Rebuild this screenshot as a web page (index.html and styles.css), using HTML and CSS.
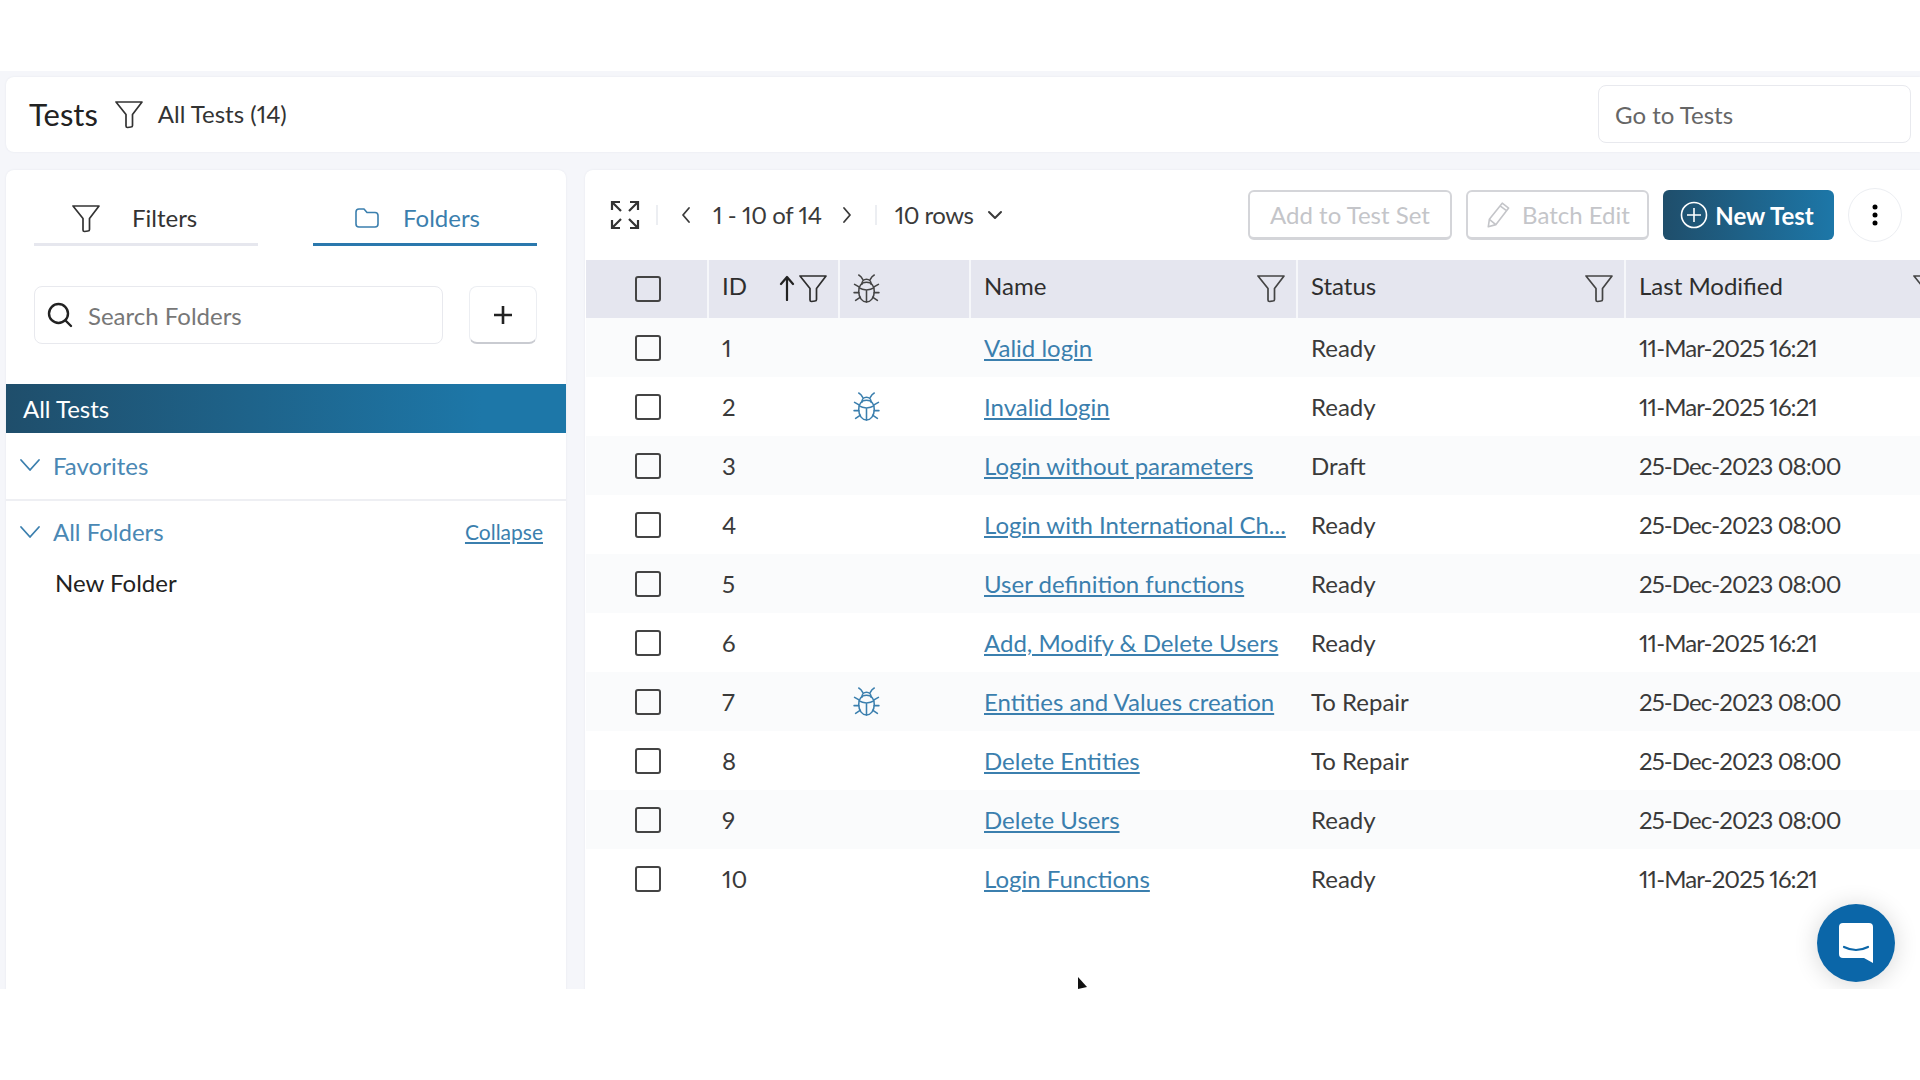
FILE: index.html
```html
<!DOCTYPE html>
<html lang="en">
<head>
    <meta charset="UTF-8">
    <title>Tests</title>
    <link rel="stylesheet" href="styles.css">
</head>
<body>
    <svg class="defs" width="0" height="0">
        <symbol id="funnel" viewBox="0 0 30 30">
            <path d="M2 3H28L18.5 15.5V26.5Q18.5 28 17 28L13.5 28.5Q12 28.5 12 27V15.5Z" fill="none" stroke="currentColor" stroke-width="1.7" stroke-linejoin="round"/>
        </symbol>
        <symbol id="bug" viewBox="0 0 26 28">
            <g fill="none" stroke="currentColor" stroke-width="1.5" stroke-linecap="round" stroke-linejoin="round">
                <path d="M13 8C7.5 8 5.500 12.500 5.500 17C5.500 23 9 27 13 27C17 27 20.500 23 20.500 17C20.500 12.500 18.500 8 13 8Z"/>
                <path d="M8.500 10C8.500 7 10.500 5 13 5C15.500 5 17.500 7 17.500 10"/>
                <path d="M6 13.500C9.500 16 16.500 16 20 13.500M13 15.500V27"/>
                <path d="M9.500 5.500C8.500 3.500 7.500 2 5.500 1M16.500 5.500C17.500 3.500 18.500 2 20.500 1M5.800 12.500L1.500 10M20.200 12.500L24.500 10M5.500 18H1M20.500 18H25M6.800 22.500L2.500 25.500M19.200 22.500L23.500 25.500"/>
            </g>
        </symbol>
        <symbol id="chev-down" viewBox="0 0 22 14">
            <path d="M2 2L11 12L20 2" fill="none" stroke="currentColor" stroke-width="1.8" stroke-linecap="round" stroke-linejoin="round"/>
        </symbol>
    </svg>

    <div class="frame">
        <header class="top-card">
            <h1 class="page-title">Tests</h1>
            <svg class="icon-funnel top-funnel"><use href="#funnel"/></svg>
            <span class="top-filter">All Tests (14)</span>
            <div class="goto">Go to Tests</div>
        </header>

        <div class="columns">
            <aside class="side">
                <div class="tabs">
                    <div class="tab">
                        <svg class="icon-funnel"><use href="#funnel"/></svg>
                        <span>Filters</span>
                    </div>
                    <div class="tab tab-active">
                        <svg class="icon-folder" viewBox="0 0 26 24"><path d="M2 6Q2 3 5 3H10L13 6.5H21Q24 6.5 24 9.500V18Q24 21 21 21H5Q2 21 2 18Z" fill="none" stroke="currentColor" stroke-width="1.6" stroke-linejoin="round"/></svg>
                        <span>Folders</span>
                    </div>
                </div>

                <div class="search-row">
                    <div class="search">
                        <svg class="icon-search" viewBox="0 0 28 28"><circle cx="12.500" cy="12.500" r="9.500" fill="none" stroke="currentColor" stroke-width="2.400"/><path d="M19.500 19.500L25 25" stroke="currentColor" stroke-width="2.400" stroke-linecap="round"/></svg>
                        <span>Search Folders</span>
                    </div>
                    <button class="add-btn">
                        <svg viewBox="0 0 20 20" width="20" height="20"><path d="M10 1V19M1 10H19" stroke="currentColor" stroke-width="2.600"/></svg>
                    </button>
                </div>

                <div class="all-tests">All Tests</div>

                <div class="group group-line">
                    <svg class="icon-chev"><use href="#chev-down"/></svg>
                    <span>Favorites</span>
                </div>
                <div class="group group-folders">
                    <svg class="icon-chev"><use href="#chev-down"/></svg>
                    <span>All Folders</span>
                    <a class="collapse" href="#">Collapse</a>
                </div>
                <div class="folder">New Folder</div>
            </aside>

            <main class="panel">
                <div class="toolbar">
                    <svg class="icon-expand" viewBox="0 0 32 32">
                        <path d="M3 11V3H11M3 3L12 12M21 3H29V11M29 3L20 12M3 21V29H11M3 29L12 20M29 21V29H21M29 29L20 20" fill="none" stroke="currentColor" stroke-width="2.200"/>
                    </svg>
                    <span class="sep"></span>
                    <svg class="icon-page" viewBox="0 0 12 20"><path d="M9 3L3 10L9 17" fill="none" stroke="currentColor" stroke-width="1.800" stroke-linecap="round" stroke-linejoin="round"/></svg>
                    <span class="page-info">1 - 10 of 14</span>
                    <svg class="icon-page" viewBox="0 0 12 20"><path d="M3 3L9 10L3 17" fill="none" stroke="currentColor" stroke-width="1.800" stroke-linecap="round" stroke-linejoin="round"/></svg>
                    <span class="sep sep-b"></span>
                    <span class="rows-info">10 rows</span>
                    <svg class="icon-rows" viewBox="0 0 16 10"><path d="M2 2L8 8L14 2" fill="none" stroke="currentColor" stroke-width="2" stroke-linecap="round" stroke-linejoin="round"/></svg>

                    <div class="actions">
                        <button class="btn btn-off btn-set">Add to Test Set</button>
                        <button class="btn btn-off btn-batch">
                            <svg class="icon-pencil" viewBox="0 0 26 28"><path d="M3 25L4 18L16 3L22 7.500L10 23ZM4 18L10 23M14 5.500L20 10" fill="none" stroke="currentColor" stroke-width="1.500" stroke-linejoin="round"/></svg>
                            Batch Edit
                        </button>
                        <button class="btn btn-new">
                            <svg class="icon-plus" viewBox="0 0 28 28"><circle cx="14" cy="14" r="12.500" fill="none" stroke="currentColor" stroke-width="1.600"/><path d="M14 7V21M7 14H21" stroke="currentColor" stroke-width="1.600"/></svg>
                            New Test
                        </button>
                        <button class="btn-more">
                            <svg viewBox="0 0 6 22" width="6" height="22"><circle cx="3" cy="3" r="2.500"/><circle cx="3" cy="11" r="2.500"/><circle cx="3" cy="19" r="2.500"/></svg>
                        </button>
                    </div>
                </div>

                <div class="row row-head">
                    <div class="cell cell-check"><span class="check"></span></div>
                    <div class="cell"><span class="head-label">ID</span><span class="arrow-up"><svg viewBox="0 0 16 26" width="16" height="26"><path d="M8 25V2M2 9L8 2L14 9" fill="none" stroke="currentColor" stroke-width="2.200" stroke-linecap="round" stroke-linejoin="round"/></svg></span><svg class="icon-funnel id-funnel"><use href="#funnel"/></svg></div>
                    <div class="cell"><svg class="icon-bug"><use href="#bug"/></svg></div>
                    <div class="cell"><span class="head-label">Name</span><svg class="icon-funnel cell-funnel"><use href="#funnel"/></svg></div>
                    <div class="cell"><span class="head-label">Status</span><svg class="icon-funnel cell-funnel"><use href="#funnel"/></svg></div>
                    <div class="cell"><span class="head-label">Last Modified</span><svg class="icon-funnel cell-funnel"><use href="#funnel"/></svg></div>
                </div>

                <div class="row">
                    <div class="cell cell-check"><span class="check"></span></div>
                    <div class="cell">1</div>
                    <div class="cell"></div>
                    <div class="cell"><a href="#">Valid login</a></div>
                    <div class="cell">Ready</div>
                    <div class="cell cell-date">11-Mar-2025 16:21</div>
                </div>
                <div class="row">
                    <div class="cell cell-check"><span class="check"></span></div>
                    <div class="cell">2</div>
                    <div class="cell"><svg class="icon-bug bug-link"><use href="#bug"/></svg></div>
                    <div class="cell"><a href="#">Invalid login</a></div>
                    <div class="cell">Ready</div>
                    <div class="cell cell-date">11-Mar-2025 16:21</div>
                </div>
                <div class="row">
                    <div class="cell cell-check"><span class="check"></span></div>
                    <div class="cell">3</div>
                    <div class="cell"></div>
                    <div class="cell"><a href="#">Login without parameters</a></div>
                    <div class="cell">Draft</div>
                    <div class="cell cell-date">25-Dec-2023 08:00</div>
                </div>
                <div class="row">
                    <div class="cell cell-check"><span class="check"></span></div>
                    <div class="cell">4</div>
                    <div class="cell"></div>
                    <div class="cell"><a href="#">Login with International Ch...</a></div>
                    <div class="cell">Ready</div>
                    <div class="cell cell-date">25-Dec-2023 08:00</div>
                </div>
                <div class="row">
                    <div class="cell cell-check"><span class="check"></span></div>
                    <div class="cell">5</div>
                    <div class="cell"></div>
                    <div class="cell"><a href="#">User definition functions</a></div>
                    <div class="cell">Ready</div>
                    <div class="cell cell-date">25-Dec-2023 08:00</div>
                </div>
                <div class="row">
                    <div class="cell cell-check"><span class="check"></span></div>
                    <div class="cell">6</div>
                    <div class="cell"></div>
                    <div class="cell"><a href="#">Add, Modify &amp; Delete Users</a></div>
                    <div class="cell">Ready</div>
                    <div class="cell cell-date">11-Mar-2025 16:21</div>
                </div>
                <div class="row">
                    <div class="cell cell-check"><span class="check"></span></div>
                    <div class="cell">7</div>
                    <div class="cell"><svg class="icon-bug bug-link"><use href="#bug"/></svg></div>
                    <div class="cell"><a href="#">Entities and Values creation</a></div>
                    <div class="cell">To Repair</div>
                    <div class="cell cell-date">25-Dec-2023 08:00</div>
                </div>
                <div class="row">
                    <div class="cell cell-check"><span class="check"></span></div>
                    <div class="cell">8</div>
                    <div class="cell"></div>
                    <div class="cell"><a href="#">Delete Entities</a></div>
                    <div class="cell">To Repair</div>
                    <div class="cell cell-date">25-Dec-2023 08:00</div>
                </div>
                <div class="row">
                    <div class="cell cell-check"><span class="check"></span></div>
                    <div class="cell">9</div>
                    <div class="cell"></div>
                    <div class="cell"><a href="#">Delete Users</a></div>
                    <div class="cell">Ready</div>
                    <div class="cell cell-date">25-Dec-2023 08:00</div>
                </div>
                <div class="row">
                    <div class="cell cell-check"><span class="check"></span></div>
                    <div class="cell">10</div>
                    <div class="cell"></div>
                    <div class="cell"><a href="#">Login Functions</a></div>
                    <div class="cell">Ready</div>
                    <div class="cell cell-date">11-Mar-2025 16:21</div>
                </div>
            </main>
        </div>

        <button class="chat">
            <svg viewBox="0 0 36 42" width="36" height="42">
                <path d="M5 1H31Q35 1 35 5V41L26 36H5Q1 36 1 32V5Q1 1 5 1Z" fill="#fff"/>
                <path d="M6 25Q18 31 30 25" fill="none" stroke="#0b66a8" stroke-width="2.200" stroke-linecap="round"/>
            </svg>
        </button>
        <svg class="cursor" viewBox="0 0 10 12" width="10" height="12"><path d="M1 0L1 12L10 10Z" fill="#111"/></svg>
    </div>
</body>
</html>
```

FILE: styles.css
```css
html, body {
    margin: 0;
    height: 100%;
    background: #fff;
    overflow: hidden;
}

body {
    font-family: "Lato", "Noto Sans", sans-serif;
    font-size: 24px;
    font-variant-numeric: proportional-nums;
    color: #3a3a3a;
    padding-top: 71px;
    box-sizing: border-box;
}

.defs {
    position: absolute;
}

.frame {
    position: relative;
    height: 918px;
    padding: 6px 0 0 6px;
    box-sizing: border-box;
    background: #f5f6fa;
    overflow: hidden;
}

/* top card */
.top-card {
    display: flex;
    align-items: center;
    height: 75px;
    padding: 0 9px 2px 23px;
    box-sizing: border-box;
    background: #fff;
    border-radius: 8px 0 0 8px;
    box-shadow: 0 0 2px #e3e5ec;
}

.page-title {
    margin: 0;
    font-size: 31px;
    font-weight: 400;
    color: #222;
}

.top-funnel {
    margin-left: 16px;
    color: #333;
}

.top-filter {
    margin-left: 14px;
    color: #333;
}

.goto {
    margin-left: auto;
    width: 313px;
    height: 58px;
    line-height: 58px;
    padding-left: 16px;
    box-sizing: border-box;
    border: 1px solid #e8e9ee;
    border-radius: 8px;
    color: #666;
}

.icon-funnel {
    width: 30px;
    height: 30px;
    flex: none;
}

/* columns */
.columns {
    display: flex;
    gap: 19px;
    margin-top: 18px;
    height: 830px;
}

/* left side */
.side {
    width: 560px;
    flex: none;
    background: #fff;
    border-radius: 8px 8px 0 0;
    box-shadow: 0 0 2px #e3e5ec;
}

.tabs {
    display: flex;
    justify-content: space-between;
    padding: 22px 29px 0 28px;
}

.tab {
    display: flex;
    align-items: center;
    width: 224px;
    height: 54px;
    padding-left: 37px;
    box-sizing: border-box;
    border-bottom: 3px solid #e6e7ee;
    color: #333;
}

.tab span {
    margin-left: 31px;
}

.tab-active {
    padding-left: 41px;
    color: #3b7fae;
    border-bottom-color: #2a78ad;
}

.tab-active span {
    margin-left: 23px;
}

.icon-folder {
    width: 26px;
    height: 24px;
}

.search-row {
    display: flex;
    align-items: center;
    justify-content: space-between;
    margin-top: 40px;
    padding: 0 29px 0 28px;
}

.search {
    display: flex;
    align-items: center;
    width: 409px;
    height: 58px;
    padding-left: 11px;
    box-sizing: border-box;
    border: 1px solid #e8e9ee;
    border-radius: 8px;
    color: #777;
}

.search span {
    margin-left: 14px;
}

.icon-search {
    width: 28px;
    height: 28px;
    color: #222;
}

.add-btn {
    display: flex;
    align-items: center;
    justify-content: center;
    width: 68px;
    height: 58px;
    padding: 0;
    background: #fff;
    border: 1px solid #eceef2;
    border-bottom: 2px solid #c9cbd1;
    border-radius: 8px;
    color: #222;
}

.all-tests {
    height: 49px;
    line-height: 49px;
    margin-top: 40px;
    padding-left: 17px;
    background: linear-gradient(90deg, #1f4e6b, #1d77a8 85%);
    color: #fff;
}

.group {
    display: flex;
    align-items: center;
    height: 66px;
    padding: 0 23px 0 13px;
    color: #4a88b4;
}

.group-line {
    height: 64px;
    padding-bottom: 2px;
    border-bottom: 2px solid #eeeff3;
}

.group-folders {
    height: 61px;
}

.icon-chev {
    width: 22px;
    height: 14px;
    margin-right: 12px;
    color: #3b7fae;
}

.collapse {
    margin-left: auto;
    font-size: 21px;
    color: #3b7fae;
}

.folder {
    padding-left: 49px;
    margin-top: 6px;
    color: #222;
}

/* main panel */
.panel {
    flex: 1;
    min-width: 0;
    padding-left: 1px;
    background: #fff;
    border-radius: 8px 0 0 0;
    box-shadow: 0 0 2px #e3e5ec;
}

.toolbar {
    display: flex;
    align-items: center;
    height: 90px;
    padding: 0 18px 0 23px;
    color: #3a3a3a;
}

.page-info, .rows-info {
    position: relative;
    top: -1px;
}

.icon-expand {
    width: 32px;
    height: 32px;
    color: #333;
}

.sep {
    width: 2px;
    height: 20px;
    margin: 0 22px 0 15px;
    background: #eceef2;
}

.sep-b {
    margin: 0 18px 0 22px;
}

.icon-page {
    width: 12px;
    height: 20px;
}

.page-info {
    margin: 0 19px 0 21px;
    letter-spacing: -0.4px;
}

.rows-info {
    letter-spacing: -0.5px;
}

.icon-rows {
    width: 16px;
    height: 10px;
    margin-left: 14px;
}

.actions {
    display: flex;
    align-items: center;
    gap: 14px;
    margin-left: auto;
}

.btn {
    display: flex;
    align-items: center;
    justify-content: center;
    gap: 9px;
    height: 50px;
    padding: 0;
    font-family: inherit;
    font-size: 24px;
    border-radius: 6px;
}

.btn-off {
    background: #fff;
    border: 2px solid #d4d5d9;
    border-bottom-width: 3px;
    color: #c4c5c9;
}

.btn-set {
    width: 204px;
}

.btn-batch {
    width: 183px;
}

.icon-pencil {
    width: 28px;
    height: 30px;
}

.btn-new {
    width: 171px;
    gap: 7px;
    padding-right: 3px;
    border: 0;
    background: linear-gradient(90deg, #1f4e6b, #1d77a8);
    color: #fff;
    font-weight: 700;
}

.icon-plus {
    width: 28px;
    height: 28px;
}

.btn-more {
    display: flex;
    align-items: center;
    justify-content: center;
    width: 54px;
    height: 54px;
    padding: 0;
    background: #fff;
    border: 1px solid #eceef2;
    border-radius: 50%;
    color: #222;
}

/* table */
.row {
    display: grid;
    grid-template-columns: 123px 131px 131px 327px 328px 328px;
    height: 59px;
}

.row:nth-child(odd) {
    background: #fafbfc;
}

.row.row-head {
    height: 58px;
    background: #e5e6ef;
    color: #2e2e2e;
}

.row-head .cell {
    padding-bottom: 2px;
    border-right: 2px solid #f6f7fa;
}

.row-head .cell-check {
    padding-left: 2px;
    padding-bottom: 1px;
}

.head-label {
    margin-bottom: 5px;
}

.cell {
    display: flex;
    align-items: center;
    padding-left: 13px;
    box-sizing: border-box;
    white-space: nowrap;
}

.cell-date {
    letter-spacing: -0.9px;
}

.cell a {
    color: #3b7fae;
}

.cell-check {
    justify-content: center;
    padding-left: 0;
}

.check {
    width: 26px;
    height: 26px;
    box-sizing: border-box;
    border: 2px solid #444;
    border-radius: 3px;
}

.arrow-up {
    display: flex;
    margin-left: auto;
    margin-right: 3px;
    color: #222;
}

.id-funnel {
    margin-right: 10px;
}

.cell-funnel {
    margin-left: auto;
    margin-right: 10px;
    color: #444;
}

.icon-bug {
    width: 27px;
    height: 29px;
    color: #444;
}

.bug-link {
    color: #3b7fae;
}

/* overlays */
.chat {
    position: absolute;
    right: 25px;
    bottom: 7px;
    display: flex;
    align-items: center;
    justify-content: center;
    width: 78px;
    height: 78px;
    padding: 0;
    border: 0;
    border-radius: 50%;
    background: #0b66a8;
    box-shadow: 0 2px 24px rgba(0, 0, 0, 0.16);
}

.cursor {
    position: absolute;
    left: 1077px;
    bottom: 0;
}
```
